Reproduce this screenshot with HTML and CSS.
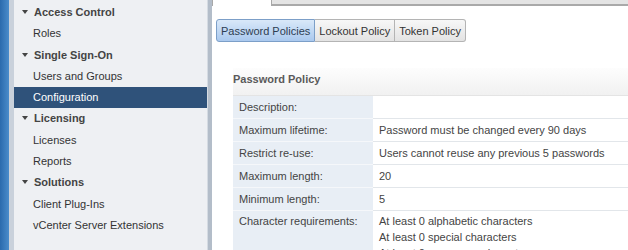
FILE: index.html
```html
<!DOCTYPE html>
<html lang="en">
<head>
    <meta charset="UTF-8">
    <title>Configuration</title>
    <link rel="stylesheet" href="styles.css">
</head>
<body>
    <div class="rail"></div>
    <div class="sidebar">
        <div class="nav-item nav-head"><span class="caret"></span>Access Control</div>
        <div class="nav-item">Roles</div>
        <div class="nav-item nav-head"><span class="caret"></span>Single Sign-On</div>
        <div class="nav-item">Users and Groups</div>
        <div class="nav-item selected">Configuration</div>
        <div class="nav-item nav-head"><span class="caret"></span>Licensing</div>
        <div class="nav-item">Licenses</div>
        <div class="nav-item">Reports</div>
        <div class="nav-item nav-head"><span class="caret"></span>Solutions</div>
        <div class="nav-item">Client Plug-Ins</div>
        <div class="nav-item">vCenter Server Extensions</div>
    </div>
    <div class="divider"></div>
    <div class="content">
        <div class="top-tabs">
            <div class="top-tab active"></div>
            <div class="top-tab-rest"></div>
        </div>
        <div class="sub-tabs">
            <button class="sub-tab active">Password Policies</button>
            <button class="sub-tab">Lockout Policy</button>
            <button class="sub-tab">Token Policy</button>
        </div>
        <div class="policy">
            <div class="policy-title">Password Policy</div>
            <table class="policy-table">
                <tr><td class="label">Description:</td><td></td></tr>
                <tr><td class="label">Maximum lifetime:</td><td>Password must be changed every 90 days</td></tr>
                <tr><td class="label">Restrict re-use:</td><td>Users cannot reuse any previous 5 passwords</td></tr>
                <tr><td class="label">Maximum length:</td><td>20</td></tr>
                <tr><td class="label">Minimum length:</td><td>5</td></tr>
                <tr>
                    <td class="label">Character requirements:</td>
                    <td>At least 0 alphabetic characters<br>At least 0 special characters<br>At least 0 uppercase characters<br>At least 0 lowercase characters</td>
                </tr>
            </table>
        </div>
    </div>
</body>
</html>
```

FILE: styles.css
```css
body {
    margin: 0;
    display: flex;
    height: 250px;
    overflow: hidden;
    font-family: "Liberation Sans", Arial, sans-serif;
    font-size: 11px;
    color: #333;
    background: #fff;
}
.rail {
    width: 9px;
    flex-shrink: 0;
    background: linear-gradient(to right, #2a6aad, #4a8ccb);
    border-right: 5px solid #c9d1db;
}
.sidebar {
    width: 193px;
    flex-shrink: 0;
    background: #eef0f3;
    padding-top: 2px;
}
.nav-item {
    height: 21.3px;
    line-height: 21.3px;
    padding-left: 19px;
    white-space: nowrap;
    color: #333;
}
.nav-head {
    font-weight: bold;
    color: #444;
}
.caret {
    display: inline-block;
    width: 0;
    height: 0;
    margin-left: -11px;
    margin-right: 6px;
    vertical-align: 2px;
    border-left: 3px solid transparent;
    border-right: 3px solid transparent;
    border-top: 4px solid #444;
}
.selected {
    background: #2f527a;
    color: #fff;
}
.divider {
    width: 4px;
    flex-shrink: 0;
    background: #b3bdc9;
    border-left: 1px solid #d5dbe2;
}
.content {
    flex: 1;
    min-width: 0;
}
.top-tabs {
    display: flex;
    height: 6px;
}
.top-tab {
    width: 58px;
    border: 1px solid #a8a8a8;
    border-top: none;
    border-bottom: none;
    background: #fff;
}
.top-tab-rest {
    flex: 1;
    background: #e4e4e4;
    border-bottom: 2px solid #a9a9a9;
}
.sub-tabs {
    display: flex;
    margin: 13px 0 0 4px;
}
.sub-tab {
    font-family: inherit;
    font-size: 11px;
    color: #333;
    height: 23px;
    padding: 0 4px;
    border: 1px solid #b4b4b4;
    border-left: none;
    background: linear-gradient(#f7f7f7, #e3e3e3);
}
.sub-tab:first-child {
    border-left: 1px solid #7c9fc8;
    border-radius: 3px 0 0 3px;
}
.sub-tab:last-child {
    border-radius: 0 3px 3px 0;
}
.sub-tab.active {
    border-color: #7c9fc8;
    background: linear-gradient(#d9e8f9, #aac9ee);
    color: #2d3d52;
}
.policy {
    margin: 26px 0 0 21px;
}
.policy-title {
    height: 27px;
    line-height: 23px;
    font-weight: bold;
    color: #5a5a5a;
    background: linear-gradient(#fdfdfd, #f1f1f1);
    border-bottom: 1px solid #e4e4e4;
}
.policy-table {
    width: 100%;
    border-collapse: collapse;
}
.policy-table td {
    height: 22px;
    padding: 0 6px;
    border-bottom: 1px solid #e2e6ea;
    color: #444;
    vertical-align: middle;
    white-space: nowrap;
}
.policy-table td.label {
    width: 128px;
    background: #e8eef5;
    border-bottom-color: #f5f7fa;
}
.policy-table tr:last-child td {
    vertical-align: top;
    padding-top: 2px;
    line-height: 16px;
}
```
